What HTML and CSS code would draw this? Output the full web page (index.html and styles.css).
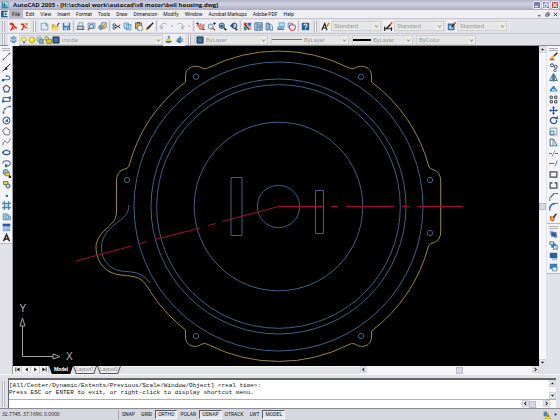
FILE: index.html
```html
<!DOCTYPE html>
<html lang="en">
<head>
    <meta charset="UTF-8">
    <meta name="viewport" content="width=device-width, initial-scale=1.0">
    <title>AutoCAD 2005 - [H:\school work\autocad\v8 motor\bell housing.dwg]</title>
    <link rel="stylesheet" href="styles.css">
</head>
<body>
    <!-- Icon set -->
    <svg class="sprite" aria-hidden="true">
        <symbol id="i-app" viewBox="0 0 12 12"><path d="M1 1h10v10H1z" fill="#2b8fb0"/><path d="M3 2h7v6H3z" fill="#d8f2f8"/><path d="M5 3v6M3 6h6" stroke="#14607c" stroke-width="1.5"/></symbol>
        <symbol id="i-doc" viewBox="0 0 12 12"><path d="M0 1h10v10H0z" fill="#2a5f8c"/><path d="M4 3h7v6H4z" fill="#d4ecf4"/><path d="M5 6h4M7 4v4" stroke="#1b3d5c"/></symbol>
        <symbol id="i-pdf" viewBox="0 0 12 12"><path d="M1 1h8l2 2v8H1z" fill="#fbe3df"/><path d="M1 1h4v3H1z" fill="#c33"/><path d="M2 11C5 8 6 5 5 2c2 5 4 6 6 6-3-1-6 0-9 3z" fill="none" stroke="#d8261c" stroke-width="1.5"/></symbol>
        <symbol id="i-pdf2" viewBox="0 0 12 12"><path d="M1 3h8v8H1z" fill="#fbe3df"/><path d="M2 11C5 8 5 5 4 3c2 4 3 5 6 5" fill="none" stroke="#d8261c" stroke-width="1.6"/><path d="M5 2l6-1-1 5z" fill="#f0a01c"/><path d="M1 2h4v2H1z" fill="#c33"/></symbol>
        <symbol id="i-new" viewBox="0 0 12 12"><path d="M1.500 1.500h7l2 2v7h-9z" fill="#d9eef8" stroke="#5c93b4"/><path d="M8 1.500v3h2" fill="none" stroke="#356a8c"/></symbol>
        <symbol id="i-open" viewBox="0 0 12 12"><path d="M1 3h4l1 1h4v7H1z" fill="#d1a92a"/><path d="M3 6h9l-2 5H1z" fill="#f6dc72"/><path d="M6 7l5-6" stroke="#333" stroke-width="1.500"/><path d="M5 3h3v3H5z" fill="#e8f4fa"/></symbol>
        <symbol id="i-save" viewBox="0 0 12 12"><path d="M1 1h10v10H1z" fill="#3a78b4"/><path d="M3 1h6v4H3z" fill="#eaf3fa"/><path d="M3 7h6v4H3z" fill="#a8cbe4"/><path d="M7 8h1v2H7z" fill="#234"/></symbol>
        <symbol id="i-print" viewBox="0 0 12 12"><path d="M4 1h5v4H3z" fill="#fff" stroke="#5d7896"/><path d="M1 5h10v5H1z" fill="#8095ae"/><path d="M1 10h10" stroke="#33465c"/><path d="M3 7h5v2H3z" fill="#dbe6ee"/></symbol>
        <symbol id="i-preview" viewBox="0 0 12 12"><path d="M1.500 1.500h9v7h-9z" fill="#e2f1fa" stroke="#4b83aa"/><circle cx="6" cy="6" r="3" fill="#b3dcf0" stroke="#325a80"/><path d="M4 8l-3 3" stroke="#b86a18" stroke-width="2"/></symbol>
        <symbol id="i-publish" viewBox="0 0 12 12"><circle cx="4" cy="7" r="3.500" fill="#5797cc"/><path d="M5 1h6v6H5z" fill="#e4eefb" stroke="#365878"/><path d="M3 4l6 5M9 3l-4 5" stroke="#d08f22" stroke-width="2"/></symbol>
        <symbol id="i-cut" viewBox="0 0 12 12"><path d="M4 4l7 4M4 8l7-4" stroke="#333" stroke-width="1.300"/><circle cx="3" cy="4" r="1.700" fill="none" stroke="#2c5388" stroke-width="1.300"/><circle cx="3" cy="8" r="1.700" fill="none" stroke="#2c5388" stroke-width="1.300"/></symbol>
        <symbol id="i-copy" viewBox="0 0 12 12"><path d="M1.500 1.500h6v7h-6zM4.500 3.500h6v7h-6z" fill="#cfe9f6" stroke="#3d86b4"/></symbol>
        <symbol id="i-paste" viewBox="0 0 12 12"><path d="M2 1h8v8H2z" fill="#d0a44c" stroke="#65502c"/><path d="M5 5h6v6H5z" fill="#eff7fc" stroke="#58809c"/><path d="M4 0h4v2H4z" fill="#456"/></symbol>
        <symbol id="i-match" viewBox="0 0 12 12"><path d="M11 1L6 6" stroke="#222" stroke-width="2"/><path d="M7 5l-5 5" stroke="#5c4422" stroke-width="3"/><path d="M3 9l-2 2" stroke="#eac850" stroke-width="2"/></symbol>
        <symbol id="i-undo" viewBox="0 0 12 12"><path d="M3 8C1 3 7 0 10 3" fill="none" stroke="#a3a4ac" stroke-width="1.300"/><path d="M0 6l4 5 2-5z" fill="#b7b8c0"/></symbol>
        <symbol id="i-redo" viewBox="0 0 12 12"><path d="M9 8C11 3 5 0 2 3" fill="none" stroke="#a3a4ac" stroke-width="1.300"/><path d="M12 6l-4 5-2-5z" fill="#b7b8c0"/></symbol>
        <symbol id="i-drop" viewBox="0 0 12 12"><path d="M3 5h6L6 8z" fill="#a4a4ac"/></symbol>
        <symbol id="i-pan" viewBox="0 0 12 12"><path d="M2 4l3 6 5-1 1-6-3 2-2-3-1 3-3-3z" fill="#e79a80" stroke="#864234" stroke-width=".7"/><path d="M0 2h4M2 0v4M8 10h4" stroke="#2458a8" stroke-width="1.300"/></symbol>
        <symbol id="i-zoom" viewBox="0 0 12 12"><circle cx="5" cy="6" r="3.400" fill="#d1ecf8" stroke="#4c82a8" stroke-width="1.200"/><path d="M7 8l4 3" stroke="#b05e24" stroke-width="2"/><path d="M8 2h4M10 0v4" stroke="#222"/></symbol>
        <symbol id="i-zoomwin" viewBox="0 0 12 12"><circle cx="5" cy="5" r="3.600" fill="#88bbdc" stroke="#35658c" stroke-width="1.300"/><path d="M3 4h4v3H3z" fill="#2d5d92"/><path d="M8 8l3 3" stroke="#222" stroke-width="2.200"/></symbol>
        <symbol id="i-zoomprev" viewBox="0 0 12 12"><circle cx="7" cy="5" r="3.600" fill="#abd0e6" stroke="#2c4f78" stroke-width="1.300"/><path d="M1 5l5-3v6z" fill="#1d4780"/><path d="M8 8l3 3" stroke="#222" stroke-width="2"/></symbol>
        <symbol id="i-props" viewBox="0 0 12 12"><path d="M1 1h4v4H1z" fill="#d53430"/><path d="M6 1h5v4H6z" fill="#3469b4"/><path d="M1 6h4v5H1z" fill="#309154"/><path d="M6 5h5v6H6z" fill="#dc9cc2"/><path d="M3 4l5 6" stroke="#333" stroke-width="1.500"/></symbol>
        <symbol id="i-center" viewBox="0 0 12 12"><path d="M1 1h10v10H1z" fill="#b8d9ed" stroke="#2f6394"/><path d="M4 1v10M4 4h7M4 7h7M8 4v7" stroke="#2f6394"/></symbol>
        <symbol id="i-palette" viewBox="0 0 12 12"><path d="M1.500 1.500h4v9h-4z" fill="#9ac8e3" stroke="#305f8b"/><path d="M6 3c4 0 4 4 4 8H7z" fill="#e8f4fb" stroke="#305f8b"/></symbol>
        <symbol id="i-sheet" viewBox="0 0 12 12"><path d="M4 1h7v6H4z" fill="#c1e3f1" stroke="#4b8eac"/><path d="M1 7l7-3 3 5-9 2z" fill="#74afce"/><path d="M2 10h9" stroke="#355878"/></symbol>
        <symbol id="i-markup" viewBox="0 0 12 12"><path d="M1.500 1.500h6v6h-6z" fill="#d8e6f4" stroke="#4f7ca4"/><path d="M4 4h6c2 2 1 6-1 7H5C3 9 3 6 4 4z" fill="#fff4f4" stroke="#d73940" stroke-width="1.400"/></symbol>
        <symbol id="i-help" viewBox="0 0 12 12"><path d="M1 1h10v10H1z" fill="#235c9c"/><path d="M4 5c0-3 4-3 4 0 0 1-2 1-2 3" fill="none" stroke="#fff" stroke-width="1.400"/><path d="M5 9h2v1H5z" fill="#fff"/></symbol>
        <symbol id="i-style" viewBox="0 0 12 12"><path d="M1 11l4-9 3 9M3 8h4" fill="none" stroke="#1c1c1c" stroke-width="1.500"/><path d="M11 1L7 7" stroke="#c28a34" stroke-width="2"/></symbol>
        <symbol id="i-dimstyle" viewBox="0 0 12 12"><path d="M0 9h11M1 6v6M10 7v5" stroke="#222" stroke-width="1.500"/><path d="M9 3L3 9" stroke="#222" stroke-width="2.200"/><path d="M11 0L8 4" stroke="#d15a30" stroke-width="2"/></symbol>
        <symbol id="i-tabstyle" viewBox="0 0 12 12"><path d="M1 2h9v9H1z" fill="#3774b0"/><path d="M3 5h5v4H3z" fill="#c9e2f2"/><path d="M11 1L6 7" stroke="#222" stroke-width="1.600"/><path d="M12 0L9 3" stroke="#e06c30" stroke-width="2"/></symbol>
        <symbol id="i-layers" viewBox="0 0 12 12"><path d="M1 8l5-2 5 2-5 3z" fill="#5b83a8"/><path d="M1 6l5-2 5 2-5 3z" fill="#a6c8df"/><path d="M1 4l5-3 5 3-5 2z" fill="#7ba6c6"/></symbol>
        <symbol id="i-bulb" viewBox="0 0 12 12"><circle cx="6" cy="5" r="3.500" fill="#f6ee6c" stroke="#a39b44"/><path d="M4.500 8h3v3h-3z" fill="#748494"/></symbol>
        <symbol id="i-sun" viewBox="0 0 12 12"><circle cx="6" cy="6" r="4.500" fill="#ecdf22" stroke="#a59620"/><circle cx="5" cy="5" r="2" fill="#fbf79c"/></symbol>
        <symbol id="i-freeze" viewBox="0 0 12 12"><circle cx="5" cy="5" r="3.800" fill="#bad3e4" stroke="#60879f"/><path d="M5 5h6v6H5z" fill="#8ba7bc" stroke="#4d6a82"/></symbol>
        <symbol id="i-lock" viewBox="0 0 12 12"><circle cx="4" cy="4" r="2.800" fill="none" stroke="#8b8b22" stroke-width="1.500"/><path d="M4 5h7v6H4z" fill="#dfd018" stroke="#6f6a18"/></symbol>
        <symbol id="i-swatch" viewBox="0 0 12 12"><path d="M1.500 1.500h9v9h-9z" fill="#3f74a8" stroke="#19243a" stroke-width="1.500"/></symbol>
        <symbol id="i-layercur" viewBox="0 0 12 12"><path d="M1 9l5-3 5 3-5 2z" fill="#4478a8"/><path d="M2 5h6l2 3H4z" fill="#e5cf36"/><path d="M5 1h3v4H5z" fill="#6f93b6"/></symbol>
        <symbol id="i-layerprev" viewBox="0 0 12 12"><path d="M1 8l5-2 5 2-5 3z" fill="#3a5e96"/><path d="M2 6l6-5v9z" fill="#5a87b8"/><path d="M8 4h3v5H8z" fill="#98b6d0"/></symbol>
        <symbol id="i-chev" viewBox="0 0 12 12"><path d="M3 5l3 3 3-3" fill="none" stroke="#aaa99a" stroke-width="1.800"/></symbol>
        <!-- draw -->
        <symbol id="i-line" viewBox="0 0 12 12"><path d="M2 10l8-8" stroke="#444"/><path d="M1 9h2v2H1zM9 1h2v2H9z" fill="#2a64a4"/></symbol>
        <symbol id="i-xline" viewBox="0 0 12 12"><path d="M1 11L11 1" stroke="#222" stroke-width="1.300"/><path d="M4 6h3v3H4z" fill="#222"/></symbol>
        <symbol id="i-pline" viewBox="0 0 12 12"><path d="M1 9h7c4 0 3-5-1-5" fill="none" stroke="#367a9e" stroke-width="1.500"/><path d="M0 8h3v3H0zM5 3h2v2H5z" fill="#1f548c"/></symbol>
        <symbol id="i-poly" viewBox="0 0 12 12"><path d="M6 1.500l4.500 3.500-2 5.500h-5L1.500 5z" fill="none" stroke="#3f536a" stroke-width="1.400"/></symbol>
        <symbol id="i-rect" viewBox="0 0 12 12"><path d="M1.500 3.500h9v5h-9z" fill="none" stroke="#3f536a" stroke-width="1.300"/><path d="M0 7h3v3H0zM9 2h3v3H9z" fill="#2a64a4"/></symbol>
        <symbol id="i-arc" viewBox="0 0 12 12"><path d="M2 11C2 6 6 2 11 2" fill="none" stroke="#444"/><path d="M1 9h2v3H1zM3 4h2v2H3zM9 1h3v2H9z" fill="#2a78b4"/></symbol>
        <symbol id="i-circle" viewBox="0 0 12 12"><circle cx="6" cy="6" r="4.600" fill="none" stroke="#33475e" stroke-width="1.300"/><path d="M5 7l4-4" stroke="#2a78b4"/><path d="M5 5h3v3H5z" fill="#2a64a4"/></symbol>
        <symbol id="i-cloud" viewBox="0 0 12 12"><path d="M3 8C0 7 1 3 3 3c1-3 5-2 5 0 3 0 3 3 2 4 2 3-2 5-4 3-2 1-4 0-3-2z" fill="none" stroke="#4c565e" stroke-width="1.200"/></symbol>
        <symbol id="i-spline" viewBox="0 0 12 12"><path d="M1 11c1-7 4-6 5-4s4 0 5-5" fill="none" stroke="#555" stroke-width="1.100"/></symbol>
        <symbol id="i-ellipse" viewBox="0 0 12 12"><ellipse cx="6" cy="6" rx="4.600" ry="2.800" fill="none" stroke="#334c78" stroke-width="1.400"/><path d="M5 2h2v2H5zM0 5h2v2H0z" fill="#2a64a4"/></symbol>
        <symbol id="i-earc" viewBox="0 0 12 12"><path d="M1 6c0-5 10-5 10 0 0 3-4 4-7 3" fill="none" stroke="#3f6a9c" stroke-width="1.400"/><path d="M4 7h3v4H4z" fill="#2a64a4"/></symbol>
        <symbol id="i-insert" viewBox="0 0 12 12"><circle cx="5" cy="4" r="3.500" fill="#8fc0dc" stroke="#376994"/><path d="M4 5h6v4H4z" fill="#e8d83a" stroke="#77701c"/><path d="M9 9h3v3H9z" fill="#222"/></symbol>
        <symbol id="i-block" viewBox="0 0 12 12"><path d="M2 2h6v4H2z" fill="#e8d83a" stroke="#555"/><circle cx="8" cy="8" r="2.800" fill="#c6dcb4" stroke="#3a5a7c" stroke-width="1.300"/></symbol>
        <symbol id="i-point" viewBox="0 0 12 12"><path d="M5 5h3v3H5z" fill="#2a78b4"/></symbol>
        <symbol id="i-hatch" viewBox="0 0 12 12"><path d="M3 3h6v6H3z" fill="#a8d0e8"/><path d="M3 0v12M9 0v12M0 3h12M0 9h12" stroke="#376d9c" stroke-width="1.300"/></symbol>
        <symbol id="i-region" viewBox="0 0 12 12"><path d="M1.500 2.500h6l4 4v4h-10z" fill="#9fcbe2" stroke="#4d83a4"/><circle cx="7" cy="7" r="2" fill="#e4f3fa" stroke="#34658b"/></symbol>
        <symbol id="i-table" viewBox="0 0 12 12"><path d="M1 1h10v10H1z" fill="#79a9de"/><path d="M1 1h10v3H1z" fill="#2b55a4"/><path d="M1 7h10M5 4v7" stroke="#cde0f5"/></symbol>
        <symbol id="i-text" viewBox="0 0 12 12"><path d="M2 11l4-9 4 9M4 8h4" fill="none" stroke="#222" stroke-width="2"/></symbol>
        <!-- modify -->
        <symbol id="i-erase" viewBox="0 0 12 12"><path d="M11 1L6 6" stroke="#222" stroke-width="2"/><path d="M7 5l-4 4" stroke="#e2b44a" stroke-width="3"/><path d="M1 9h6v2H1z" fill="#d83c34"/></symbol>
        <symbol id="i-copyobj" viewBox="0 0 12 12"><circle cx="4" cy="3" r="2" fill="none" stroke="#345" stroke-width="1.300"/><circle cx="9" cy="5" r="2" fill="none" stroke="#345" stroke-width="1.300"/><circle cx="8" cy="10" r="1.700" fill="none" stroke="#2a78b4" stroke-width="1.300"/></symbol>
        <symbol id="i-mirror" viewBox="0 0 12 12"><path d="M5 2v8H1zM7 2v8h4z" fill="#dde6ee" stroke="#345f88" stroke-width="1.200"/><path d="M6 0v12" stroke="#555"/></symbol>
        <symbol id="i-offset" viewBox="0 0 12 12"><path d="M1 10c0-4 2-3 3-6 1-2 4-2 4 0 1 3 3 2 3 6z" fill="#4a83b8"/><path d="M4 8h5" stroke="#bfdcf0" stroke-width="2"/></symbol>
        <symbol id="i-array" viewBox="0 0 12 12"><path d="M1.500 1.500h3v3h-3zM7.500 1.500h3v3h-3zM1.500 7.500h3v3h-3zM7.500 7.500h3v3h-3z" fill="#fff" stroke="#3e4850" stroke-width="1.300"/></symbol>
        <symbol id="i-move" viewBox="0 0 12 12"><path d="M6 1v10M1 6h10" stroke="#24569c" stroke-width="1.600"/><path d="M4 3h4L6 0zM4 9h4l-2 3zM3 4v4L0 6zM9 4v4l3-2z" fill="#24569c"/></symbol>
        <symbol id="i-rotate" viewBox="0 0 12 12"><path d="M9 3C5 0 1 4 2 7s6 5 8 1V5" fill="none" stroke="#26589c" stroke-width="1.700"/><path d="M7 4h5V0z" fill="#26589c"/></symbol>
        <symbol id="i-scale" viewBox="0 0 12 12"><path d="M1.500 1.500h9v9h-9z" fill="#e5f1f8" stroke="#5688a8"/><path d="M1.500 5.500h5v5h-5z" fill="none" stroke="#335f86"/></symbol>
        <symbol id="i-stretch" viewBox="0 0 12 12"><path d="M1.500 1.500h4v9h-4z" fill="#fff" stroke="#3f536a" stroke-width="1.200"/><path d="M6 1l5 9.500H6" fill="#b6dcf0" stroke="#376994"/></symbol>
        <symbol id="i-trim" viewBox="0 0 12 12"><path d="M0 6h4M8 6h4" stroke="#2a78b4" stroke-width="1.300"/><path d="M4 10l4-8" stroke="#678"/></symbol>
        <symbol id="i-extend" viewBox="0 0 12 12"><path d="M0 6h7" stroke="#2a78b4" stroke-width="1.300"/><path d="M8 10l3-8" stroke="#2a64a4"/></symbol>
        <symbol id="i-breakpt" viewBox="0 0 12 12"><path d="M1.500 2.500h9v7h-9z" fill="none" stroke="#3f4b56" stroke-width="1.600"/></symbol>
        <symbol id="i-break" viewBox="0 0 12 12"><path d="M4 2.500H1.500v7h9v-7H8" fill="none" stroke="#3f4b56" stroke-width="1.600"/><path d="M4 1v3M8 1v3" stroke="#2a78b4"/></symbol>
        <symbol id="i-chamfer" viewBox="0 0 12 12"><path d="M1 12V8l6-6h5" fill="none" stroke="#444"/><path d="M2 7l5-5" stroke="#2a78b4" stroke-width="1.500"/></symbol>
        <symbol id="i-fillet" viewBox="0 0 12 12"><path d="M1 12V9c0-4 3-7 7-7h4" fill="none" stroke="#444"/><path d="M1 9c0-4 3-7 7-7" fill="none" stroke="#2a64a4" stroke-width="1.800"/></symbol>
        <symbol id="i-explode" viewBox="0 0 12 12"><path d="M1 4l4 1 3-3v4l-2 5-4-1z" fill="#d9422c"/><path d="M10 1L6 6" stroke="#444" stroke-width="2"/><path d="M3 6h3v3H3z" fill="#f2cb38"/></symbol>
        <symbol id="i-front" viewBox="0 0 12 12"><path d="M1 1h5v5H1zM7 7h4v4H7z" fill="#93b4d0"/><path d="M3 3h7v6H3z" fill="#285f9c"/></symbol>
        <symbol id="i-back" viewBox="0 0 12 12"><path d="M3 3h6v6H3z" fill="#3d84bc"/><path d="M1 1h5v4H1zM6 6h5v5H6z" fill="#d7e8f3" stroke="#34628e"/></symbol>
        <symbol id="i-above" viewBox="0 0 12 12"><path d="M4 5h7v6H4z" fill="#a3c4dc"/><path d="M1 1h10v7H1z" fill="#29609c"/></symbol>
        <symbol id="i-under" viewBox="0 0 12 12"><path d="M1 1h10v7H1z" fill="#3d7cb4"/><path d="M4.500 5.500h6v5h-6z" fill="#edf5fa" stroke="#50779a"/></symbol>
        <!-- scroll and tab arrows -->
        <symbol id="i-left" viewBox="0 0 12 12"><path d="M8 2L4 6l4 4" fill="none" stroke="#222" stroke-width="2.500"/></symbol>
        <symbol id="i-right" viewBox="0 0 12 12"><path d="M4 2l4 4-4 4" fill="none" stroke="#222" stroke-width="2.500"/></symbol>
        <symbol id="i-up" viewBox="0 0 12 12"><path d="M2 8l4-5 4 5z" fill="#222"/></symbol>
        <symbol id="i-down" viewBox="0 0 12 12"><path d="M2 4l4 5 4-5z" fill="#222"/></symbol>
        <symbol id="i-first" viewBox="0 0 12 12"><path d="M2 1v10" stroke="#111" stroke-width="2"/><path d="M11 1v10L4 6z" fill="#111"/></symbol>
        <symbol id="i-prev" viewBox="0 0 12 12"><path d="M9 1v10L3 6z" fill="#111"/></symbol>
        <symbol id="i-next" viewBox="0 0 12 12"><path d="M3 1v10l6-5z" fill="#111"/></symbol>
        <symbol id="i-last" viewBox="0 0 12 12"><path d="M10 1v10" stroke="#111" stroke-width="2"/><path d="M1 1v10l7-5z" fill="#111"/></symbol>
        <symbol id="i-min" viewBox="0 0 12 12"><path d="M2 9h6" stroke="currentColor" stroke-width="2.500"/></symbol>
        <symbol id="i-restore" viewBox="0 0 12 12"><path d="M4 4V2h6v6H8M2 5h6v5H2z" fill="none" stroke="currentColor" stroke-width="1.700"/></symbol>
        <symbol id="i-close" viewBox="0 0 12 12"><path d="M2 2l8 8M10 2l-8 8" stroke="currentColor" stroke-width="2.200"/></symbol>
        <symbol id="i-comm" viewBox="0 0 12 12"><path d="M1 1h5v7H1z" fill="#4b83c0"/><path d="M7 3l5 9H3z" fill="#f6dc20" stroke="#8a7a14" stroke-width=".7"/><path d="M7.500 6v3" stroke="#222" stroke-width="1.200"/></symbol>
    </svg>

    <div class="window">
        <header class="titlebar">
            <svg class="icon"><use href="#i-app"/></svg>
            <h1>AutoCAD 2005 - [H:\school work\autocad\v8 motor\bell housing.dwg]</h1>
            <button class="win-btn" aria-label="Minimize"><svg><use href="#i-min"/></svg></button>
            <button class="win-btn" aria-label="Restore"><svg><use href="#i-restore"/></svg></button>
            <button class="win-btn win-close" aria-label="Close"><svg><use href="#i-close"/></svg></button>
        </header>

        <nav class="menubar">
            <svg class="icon"><use href="#i-doc"/></svg>
            <button class="menu active">File</button>
            <button class="menu">Edit</button>
            <button class="menu">View</button>
            <button class="menu">Insert</button>
            <button class="menu">Format</button>
            <button class="menu">Tools</button>
            <button class="menu">Draw</button>
            <button class="menu">Dimension</button>
            <button class="menu">Modify</button>
            <button class="menu">Window</button>
            <button class="menu">Acrobat Markups</button>
            <button class="menu">Adobe PDF</button>
            <button class="menu">Help</button>
            <span class="spacer"></span>
            <button class="doc-btn" aria-label="Minimize drawing"><svg><use href="#i-min"/></svg></button>
            <button class="doc-btn" aria-label="Restore drawing"><svg><use href="#i-restore"/></svg></button>
            <button class="doc-btn" aria-label="Close drawing"><svg><use href="#i-close"/></svg></button>
        </nav>

        <div class="toolbar standard">
            <span class="grip"></span>
            <button class="tool" aria-label="Convert to PDF"><svg><use href="#i-pdf"/></svg></button>
            <button class="tool" aria-label="Convert and send"><svg><use href="#i-pdf2"/></svg></button>
            <span class="grip"></span>
            <button class="tool" aria-label="New"><svg><use href="#i-new"/></svg></button>
            <button class="tool" aria-label="Open"><svg><use href="#i-open"/></svg></button>
            <button class="tool" aria-label="Save"><svg><use href="#i-save"/></svg></button>
            <span class="sep"></span>
            <button class="tool" aria-label="Plot"><svg><use href="#i-print"/></svg></button>
            <button class="tool" aria-label="Plot preview"><svg><use href="#i-preview"/></svg></button>
            <button class="tool" aria-label="Publish"><svg><use href="#i-publish"/></svg></button>
            <span class="sep"></span>
            <button class="tool" aria-label="Cut"><svg><use href="#i-cut"/></svg></button>
            <button class="tool" aria-label="Copy"><svg><use href="#i-copy"/></svg></button>
            <button class="tool" aria-label="Paste"><svg><use href="#i-paste"/></svg></button>
            <button class="tool" aria-label="Match properties"><svg><use href="#i-match"/></svg></button>
            <span class="sep"></span>
            <button class="tool" aria-label="Undo"><svg><use href="#i-undo"/></svg></button>
            <button class="tool narrow" aria-label="Undo list"><svg><use href="#i-drop"/></svg></button>
            <button class="tool" aria-label="Redo"><svg><use href="#i-redo"/></svg></button>
            <button class="tool narrow" aria-label="Redo list"><svg><use href="#i-drop"/></svg></button>
            <span class="sep"></span>
            <button class="tool" aria-label="Pan"><svg><use href="#i-pan"/></svg></button>
            <button class="tool" aria-label="Zoom realtime"><svg><use href="#i-zoom"/></svg></button>
            <button class="tool" aria-label="Zoom window"><svg><use href="#i-zoomwin"/></svg></button>
            <button class="tool" aria-label="Zoom previous"><svg><use href="#i-zoomprev"/></svg></button>
            <span class="sep"></span>
            <button class="tool" aria-label="Properties"><svg><use href="#i-props"/></svg></button>
            <button class="tool" aria-label="DesignCenter"><svg><use href="#i-center"/></svg></button>
            <button class="tool" aria-label="Tool palettes"><svg><use href="#i-palette"/></svg></button>
            <button class="tool" aria-label="Sheet set manager"><svg><use href="#i-sheet"/></svg></button>
            <button class="tool" aria-label="Markup set manager"><svg><use href="#i-markup"/></svg></button>
            <span class="sep"></span>
            <button class="tool" aria-label="Help"><svg><use href="#i-help"/></svg></button>
            <span class="grip"></span>
            <button class="tool" aria-label="Text style"><svg><use href="#i-style"/></svg></button>
            <div class="combo style-combo"><select aria-label="Text style"><option>Standard</option></select><svg class="chev"><use href="#i-chev"/></svg></div>
            <button class="tool" aria-label="Dimension style"><svg><use href="#i-dimstyle"/></svg></button>
            <div class="combo style-combo"><select aria-label="Dimension style"><option>Standard</option></select><svg class="chev"><use href="#i-chev"/></svg></div>
            <button class="tool" aria-label="Table style"><svg><use href="#i-tabstyle"/></svg></button>
            <div class="combo style-combo"><select aria-label="Table style"><option>Standard</option></select><svg class="chev"><use href="#i-chev"/></svg></div>
        </div>

        <div class="toolbar layers">
            <span class="grip"></span>
            <button class="tool" aria-label="Layer properties"><svg><use href="#i-layers"/></svg></button>
            <div class="combo layer-combo">
                <svg><use href="#i-bulb"/></svg>
                <svg><use href="#i-sun"/></svg>
                <svg><use href="#i-freeze"/></svg>
                <svg><use href="#i-lock"/></svg>
                <svg><use href="#i-swatch"/></svg>
                <select aria-label="Layer"><option>inside</option></select>
                <svg class="chev"><use href="#i-chev"/></svg>
            </div>
            <button class="tool" aria-label="Make layer current"><svg><use href="#i-layercur"/></svg></button>
            <button class="tool" aria-label="Layer previous"><svg><use href="#i-layerprev"/></svg></button>
            <span class="grip"></span>
            <div class="combo color-combo">
                <svg><use href="#i-swatch"/></svg>
                <select aria-label="Color"><option>ByLayer</option></select>
                <svg class="chev"><use href="#i-chev"/></svg>
            </div>
            <div class="combo type-combo">
                <span class="stroke"></span>
                <select aria-label="Linetype"><option>ByLayer</option></select>
                <svg class="chev"><use href="#i-chev"/></svg>
            </div>
            <div class="combo weight-combo">
                <span class="stroke thick"></span>
                <select aria-label="Lineweight"><option>ByLayer</option></select>
                <svg class="chev"><use href="#i-chev"/></svg>
            </div>
            <div class="combo plot-combo">
                <select aria-label="Plot style"><option>ByColor</option></select>
                <svg class="chev"><use href="#i-chev"/></svg>
            </div>
        </div>

        <main class="workspace">
            <aside class="dock dock-left">
                <div class="palette">
                    <span class="grip-h"></span>
                    <div class="tools draw-tools">
                        <button aria-label="Line"><svg><use href="#i-line"/></svg></button>
                        <button aria-label="Construction line"><svg><use href="#i-xline"/></svg></button>
                        <button aria-label="Polyline"><svg><use href="#i-pline"/></svg></button>
                        <button aria-label="Polygon"><svg><use href="#i-poly"/></svg></button>
                        <button aria-label="Rectangle"><svg><use href="#i-rect"/></svg></button>
                        <button aria-label="Arc"><svg><use href="#i-arc"/></svg></button>
                        <button aria-label="Circle"><svg><use href="#i-circle"/></svg></button>
                        <button aria-label="Revision cloud"><svg><use href="#i-cloud"/></svg></button>
                        <button aria-label="Spline"><svg><use href="#i-spline"/></svg></button>
                        <button aria-label="Ellipse"><svg><use href="#i-ellipse"/></svg></button>
                        <button aria-label="Ellipse arc"><svg><use href="#i-earc"/></svg></button>
                        <button aria-label="Insert block"><svg><use href="#i-insert"/></svg></button>
                        <button aria-label="Make block"><svg><use href="#i-block"/></svg></button>
                        <button aria-label="Point"><svg><use href="#i-point"/></svg></button>
                        <button aria-label="Hatch"><svg><use href="#i-hatch"/></svg></button>
                        <button aria-label="Region"><svg><use href="#i-region"/></svg></button>
                        <button aria-label="Table"><svg><use href="#i-table"/></svg></button>
                        <button aria-label="Multiline text"><svg><use href="#i-text"/></svg></button>
                    </div>
                </div>
            </aside>

            <section class="drawing">
                <div class="view">
                    <svg class="canvas" viewBox="13 46 526 320" role="img" aria-label="Bell housing drawing">
                        <g class="part">
                            <circle cx="278.500" cy="206.500" r="144.500"/>
                            <circle cx="278.500" cy="206.500" r="127.500"/>
                            <circle cx="278.500" cy="206.500" r="121.800"/>
                            <circle cx="278.500" cy="206.500" r="84.300"/>
                            <circle cx="278.500" cy="206.500" r="21.200"/>
                            <path d="M231 177.500h11v58h-11zM315.500 190.500h8v43h-8z"/>
                            <circle cx="196" cy="76.700" r="2.700"/>
                            <circle cx="361" cy="76.700" r="2.700"/>
                            <circle cx="127" cy="180" r="2.700"/>
                            <circle cx="430" cy="180" r="2.700"/>
                            <circle cx="430" cy="233" r="2.700"/>
                            <circle cx="196" cy="336" r="2.700"/>
                            <circle cx="361" cy="336" r="2.700"/>
                            <path d="M128.700 205C129 212 126 216 119 221C110 228 101.500 235 101.500 248C101.500 260 109 269 121 271C131 272 138 272 143 276Q147 279 150 283"/>
                        </g>
                        <path class="outline" d="M209 67.500A155.300 155.300 0 0 1 348 67.500Q352 70 355 68C362 64 371.500 67 371.500 76V82A155.300 155.300 0 0 1 429 167Q430 169 433 169.500Q440.700 172 440.700 181V232Q440.700 240 434 242.500Q430 243 428.500 246A155.300 155.300 0 0 1 371.500 331V337C371.500 346 362 349 355 344Q352 342.500 348 345A155.300 155.300 0 0 1 209 345Q205 342.500 202 344C195 349 185.500 346 185.500 337V330A155.300 155.300 0 0 1 152 294C145 283 142 278 133 276.500C124 275 117 275.500 110 272C100 266 96 257 96 247C96 241 100 234 105 230C110 225 116.500 221 116.500 212V181Q116.500 172 123 169.500Q128 169 129 166A155.300 155.300 0 0 1 185.500 82V76C185.500 67 195 64 202 68Q205 70 209 67.500z"/>
                        <path class="axis" d="M278.500 206.500H324M331 206.500h7M346 206.500h48M402 206.500h7M417 206.500h46M278.500 206.500L222 221.500M216 223.500l-8 2M200 228l-45 11.500M147 241.500l-7 2M131.500 246L76 261"/>
                        <g class="ucs">
                            <path d="M22.500 326v30.500H53M20 326l2.500-8 2.500 8zM53 354v5l7-2.500z"/>
                            <text x="19.500" y="312">Y</text>
                            <text x="66" y="360">X</text>
                        </g>
                    </svg>
                    <div class="scroll-v">
                        <button aria-label="Scroll up"><svg><use href="#i-up"/></svg></button>
                        <span class="track"><span class="thumb"></span></span>
                        <button aria-label="Scroll down"><svg><use href="#i-down"/></svg></button>
                    </div>
                </div>
                <div class="tabs">
                    <button class="tab-nav" aria-label="First layout"><svg><use href="#i-first"/></svg></button>
                    <button class="tab-nav" aria-label="Previous layout"><svg><use href="#i-prev"/></svg></button>
                    <button class="tab-nav" aria-label="Next layout"><svg><use href="#i-next"/></svg></button>
                    <button class="tab-nav" aria-label="Last layout"><svg><use href="#i-last"/></svg></button>
                    <button class="tab current"><span>Model</span></button>
                    <button class="tab"><span>Layout1</span></button>
                    <button class="tab"><span>Layout2</span></button>
                    <span class="tab-rest"></span>
                    <div class="scroll-h">
                        <button aria-label="Scroll left"><svg><use href="#i-left"/></svg></button>
                        <span class="track"><span class="thumb"></span></span>
                        <button aria-label="Scroll right"><svg><use href="#i-right"/></svg></button>
                    </div>
                    <span class="corner"></span>
                </div>
            </section>

            <aside class="dock dock-right">
                <div class="palette">
                    <span class="grip-h"></span>
                    <div class="tools modify-tools">
                        <button aria-label="Erase"><svg><use href="#i-erase"/></svg></button>
                        <button aria-label="Copy object"><svg><use href="#i-copyobj"/></svg></button>
                        <button aria-label="Mirror"><svg><use href="#i-mirror"/></svg></button>
                        <button aria-label="Offset"><svg><use href="#i-offset"/></svg></button>
                        <button aria-label="Array"><svg><use href="#i-array"/></svg></button>
                        <button aria-label="Move"><svg><use href="#i-move"/></svg></button>
                        <button aria-label="Rotate"><svg><use href="#i-rotate"/></svg></button>
                        <button aria-label="Scale"><svg><use href="#i-scale"/></svg></button>
                        <button aria-label="Stretch"><svg><use href="#i-stretch"/></svg></button>
                        <button aria-label="Trim"><svg><use href="#i-trim"/></svg></button>
                        <button aria-label="Extend"><svg><use href="#i-extend"/></svg></button>
                        <button aria-label="Break at point"><svg><use href="#i-breakpt"/></svg></button>
                        <button aria-label="Break"><svg><use href="#i-break"/></svg></button>
                        <button aria-label="Chamfer"><svg><use href="#i-chamfer"/></svg></button>
                        <button aria-label="Fillet"><svg><use href="#i-fillet"/></svg></button>
                        <button aria-label="Explode"><svg><use href="#i-explode"/></svg></button>
                    </div>
                </div>
                <div class="palette">
                    <span class="grip-h"></span>
                    <div class="tools order-tools">
                        <button aria-label="Bring to front"><svg><use href="#i-front"/></svg></button>
                        <button aria-label="Send to back"><svg><use href="#i-back"/></svg></button>
                        <button aria-label="Bring above object"><svg><use href="#i-above"/></svg></button>
                        <button aria-label="Send under object"><svg><use href="#i-under"/></svg></button>
                    </div>
                </div>
            </aside>
        </main>

        <section class="command">
            <span class="grip"></span>
            <div class="console">
                <div class="history">
                    <pre>[All/Center/Dynamic/Extents/Previous/Scale/Window/Object] &lt;real time&gt;:
Press ESC or ENTER to exit, or right-click to display shortcut menu.</pre>
                    <div class="scroll-v">
                        <button aria-label="History up"><svg><use href="#i-up"/></svg></button>
                        <span class="track"></span>
                        <button aria-label="History down"><svg><use href="#i-down"/></svg></button>
                    </div>
                </div>
                <div class="prompt">
                    <input type="text" aria-label="Command">
                    <div class="scroll-h">
                        <button aria-label="Command left"><svg><use href="#i-left"/></svg></button>
                        <span class="track"><span class="thumb"></span></span>
                        <button aria-label="Command right"><svg><use href="#i-right"/></svg></button>
                    </div>
                </div>
            </div>
        </section>

        <footer class="statusbar">
            <span class="coords">32.7745, 37.1690, 0.0000</span>
            <button class="mode">SNAP</button>
            <button class="mode">GRID</button>
            <button class="mode on">ORTHO</button>
            <button class="mode">POLAR</button>
            <button class="mode on">OSNAP</button>
            <button class="mode">OTRACK</button>
            <button class="mode">LWT</button>
            <button class="mode on">MODEL</button>
            <span class="spacer"></span>
            <svg class="icon"><use href="#i-comm"/></svg>
            <button class="doc-btn" aria-label="Status bar menu"><svg><use href="#i-down"/></svg></button>
        </footer>
    </div>
</body>
</html>
```
FILE: styles.css
```css
* {
    box-sizing: border-box;
}
body {
    margin: 0;
    background: #e1e1e8;
    color: #111;
    font-family: Roboto, "Liberation Sans", sans-serif;
    font-size: 5px;
    line-height: 8px;
}
button,
select,
input {
    margin: 0;
    padding: 0;
    border: 0;
    border-radius: 0;
    background: none;
    color: inherit;
    font: inherit;
}
svg {
    display: block;
    flex: none;
}
.sprite {
    position: absolute;
    width: 0;
    height: 0;
}
.icon {
    width: 8px;
    height: 8px;
}
.spacer {
    flex: 1;
}
.window {
    display: flex;
    flex-direction: column;
    height: 100vh;
}

/* title and menus */
.titlebar {
    display: flex;
    align-items: center;
    gap: 1px;
    height: 10px;
    padding: 0 1px;
    background: linear-gradient(#b4b4cc, #d2d2e2 40%, #a9a9c4);
}
.titlebar h1 {
    flex: 1;
    margin: 0;
    padding-left: 3px;
    font-family: "Open Sans", sans-serif;
    font-size: 6px;
    line-height: 8px;
    font-weight: bold;
    white-space: nowrap;
}
.win-btn {
    display: grid;
    place-items: center;
    width: 8px;
    height: 8px;
    border: 1px solid #f0f0f8;
    border-radius: 1px;
    background: #7c7cb0;
    color: #fff;
}
.win-btn svg {
    width: 6px;
    height: 6px;
}
.win-close {
    background: #d2363a;
}
.menubar {
    display: flex;
    align-items: center;
    height: 8px;
    padding: 0 1px;
    background: #ededf2;
}
.menu {
    height: 8px;
    padding: 0 3px;
    line-height: 8px;
    white-space: nowrap;
}
.menu.active {
    background: #b7b7c6;
}
.doc-btn {
    display: grid;
    place-items: center;
    width: 8px;
    height: 8px;
    color: #333;
}
.doc-btn svg {
    width: 5px;
    height: 5px;
}

/* toolbars */
.toolbar {
    display: flex;
    align-items: center;
    background: #e1e1e8;
    border-top: 1px solid #c6c6d0;
}
.standard {
    height: 15px;
}
.layers {
    height: 13px;
    border-bottom: 1px solid #8c8c94;
}
.grip {
    width: 3px;
    height: 11px;
    margin: 0 3px 0 2px;
    border-left: 1px solid #b4b4be;
    border-right: 1px solid #b4b4be;
    background: #fff;
}
.tool + .grip {
    margin-left: 3px;
}
.tool {
    display: grid;
    place-items: center;
    width: 11px;
    height: 12px;
    background: #efeff3;
}
.tool svg {
    width: 9px;
    height: 9px;
}
.tool.narrow {
    width: 6px;
}
.tool.narrow svg {
    width: 6px;
    height: 6px;
}
.sep {
    width: 1px;
    height: 10px;
    margin: 0 1px;
    background: #c2c2cc;
}
.combo {
    display: flex;
    align-items: center;
    height: 10px;
    border: 1px solid #cfcfd4;
    background: #e6e6e6;
    color: #9c9c9c;
    font-size: 6px;
}
.combo svg {
    width: 8px;
    height: 8px;
}
.combo select {
    flex: 1;
    min-width: 0;
    height: 8px;
    padding-left: 2px;
    appearance: none;
    line-height: 8px;
}
.combo .chev {
    width: 7px;
    height: 8px;
    background: #ecebe4;
}
.style-combo {
    width: 50px;
    margin-right: 2px;
}
.layer-combo {
    width: 144px;
}
.color-combo {
    width: 74px;
    margin-right: 3px;
    padding-left: 1px;
}
.type-combo {
    width: 78px;
    margin-right: 3px;
}
.weight-combo {
    width: 61px;
    margin-right: 3px;
}
.plot-combo {
    width: 60px;
}
.stroke {
    width: 30px;
    border-top: 1px solid #777;
}
.stroke.thick {
    width: 18px;
    border-top: 2px solid #000;
}

/* work area */
.workspace {
    display: flex;
    flex: 1;
    min-height: 0;
}
.dock-left {
    width: 13px;
    border-right: 1px solid #9c9ca4;
}
.dock-right {
    width: 14px;
    padding-left: 1px;
}
.palette {
    padding-top: 2px;
    border-bottom: 1px solid #b8b8c0;
    background: #f5f5f8;
}
.grip-h {
    display: block;
    height: 3px;
    margin: 0 2px;
    border-top: 1px solid #b0b0b8;
    border-bottom: 1px solid #b0b0b8;
}
.tools {
    display: flex;
    flex-direction: column;
}
.tools button {
    display: grid;
    place-items: center;
    flex: 1;
    min-height: 0;
}
.tools svg {
    width: 9px;
    height: 9px;
}
.draw-tools {
    height: 192px;
}
.modify-tools {
    height: 172px;
}
.order-tools {
    height: 44px;
}
.drawing {
    display: flex;
    flex: 1;
    flex-direction: column;
    min-width: 0;
}
.view {
    display: flex;
    flex: 1;
    min-height: 0;
    background: #000;
}
.canvas {
    flex: 1;
    min-width: 0;
    height: 100%;
}
.part {
    fill: none;
    stroke: #3f6187;
}
.outline {
    fill: none;
    stroke: #978544;
}
.axis {
    fill: none;
    stroke: #a80c34;
}
.ucs path {
    fill: none;
    stroke: #a4a4a4;
}
.ucs text {
    fill: #b4b4b4;
    font-family: "Liberation Sans", sans-serif;
    font-size: 10px;
}

/* scroll bars */
.scroll-v,
.scroll-h {
    display: flex;
    background: #f6f6fa;
}
.scroll-v {
    flex-direction: column;
    width: 7px;
}
.scroll-v button,
.scroll-h button {
    display: grid;
    place-items: center;
    width: 7px;
    height: 7px;
    border: 1px solid #d4d4de;
    background: #e6e6ee;
}
.scroll-v button svg,
.scroll-h button svg {
    width: 5px;
    height: 5px;
}
.track {
    display: flex;
    flex: 1;
    align-items: center;
    justify-content: center;
}
.thumb {
    width: 7px;
    height: 7px;
    border: 1px solid #bcbccc;
    background: #d8d8e4;
}

/* layout tabs */
.tabs {
    display: flex;
    height: 8px;
    background: #e1e1e8;
}
.tab-nav {
    display: grid;
    place-items: center;
    width: 9px;
    height: 7px;
    border-right: 1px solid #c8c8d0;
    background: #f2f2f5;
}
.tab-nav svg {
    width: 5px;
    height: 5px;
}
.tab {
    width: 24px;
    height: 8px;
    padding: 0 1px 1px;
    background: #55555c;
    clip-path: polygon(0 0, 100% 0, 88% 100%, 12% 100%);
    color: #84848c;
    line-height: 7px;
}
.tab span {
    display: block;
    background: #ececf0;
    clip-path: polygon(0 0, 100% 0, 88% 100%, 12% 100%);
}
.tab.current {
    background: #000;
    color: #fff;
    font-weight: bold;
}
.tab.current span {
    background: #000;
}
.tab-rest {
    flex: 8;
    border-top: 1px solid #f6f6fa;
}
.tabs .scroll-h {
    flex: 6;
}
.tabs .track {
    padding-left: 20px;
}
.corner {
    width: 7px;
}

/* command line */
.command {
    display: flex;
    height: 34px;
    padding-top: 3px;
    border-top: 1px solid #f8f8fc;
}
.command .grip {
    height: 26px;
    margin-top: 3px;
}
.console {
    flex: 1;
    min-width: 0;
    margin-right: 4px;
    border-top: 2px solid #66666c;
    border-left: 1px solid #66666c;
    background: #fff;
}
.history {
    display: flex;
    justify-content: space-between;
    height: 20px;
    border-bottom: 1px solid #b0b0b8;
}
.history pre {
    margin: 0;
    padding-top: 2px;
    font-family: "Liberation Mono", monospace;
    font-size: 6px;
    line-height: 7px;
}
.prompt {
    display: flex;
    height: 8px;
}
.prompt input {
    flex: 1;
    min-width: 0;
}
.prompt .scroll-h {
    width: 34px;
    padding-right: 6px;
}
.prompt .track {
    justify-content: flex-start;
}

/* status bar */
.statusbar {
    display: flex;
    align-items: center;
    height: 12px;
    padding: 0 1px 0 2px;
    border-top: 1px solid #8c8c94;
    background: #d7d7e0;
}
.coords {
    width: 117px;
    border-right: 1px solid #a4a4ae;
    font-family: "Open Sans", sans-serif;
    line-height: 9px;
}
.mode {
    height: 9px;
    padding: 0 2px;
    border: 1px solid transparent;
    line-height: 7px;
}
.mode.on {
    border-color: #5c5c64 #f6f6fa #f6f6fa #5c5c64;
    background: #e6e6ec;
}
```
